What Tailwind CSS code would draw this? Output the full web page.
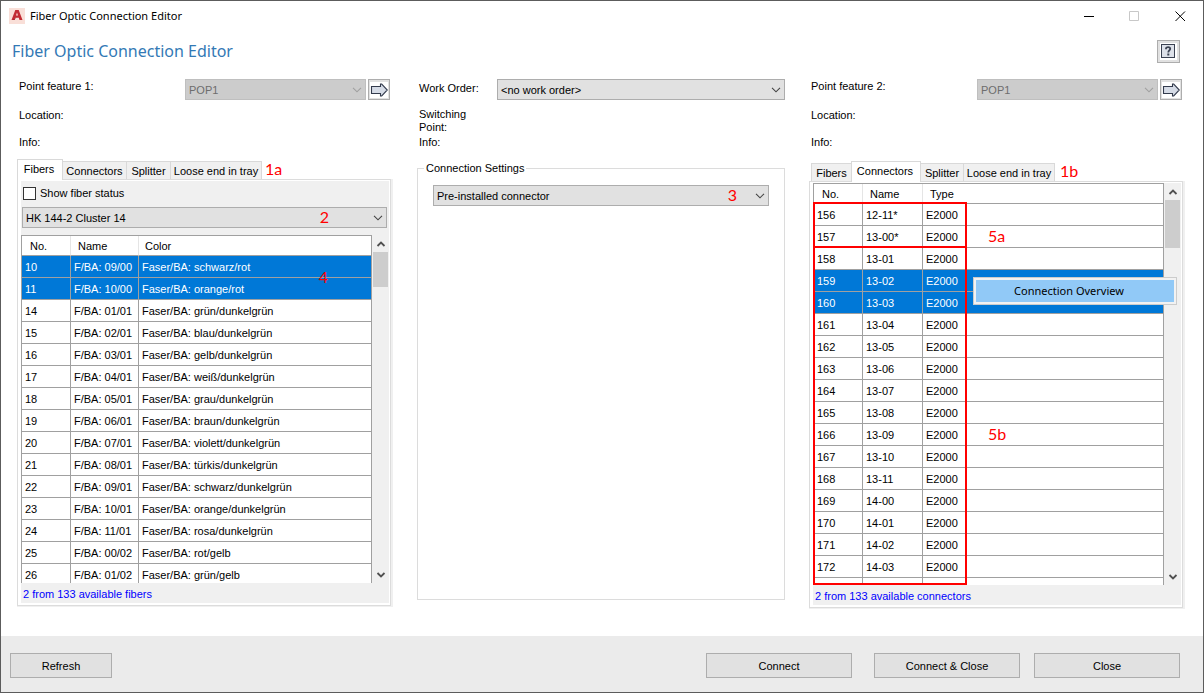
<!DOCTYPE html>
<html lang="en">
<head>
  <meta charset="UTF-8" />
  <meta name="viewport" content="width=device-width, initial-scale=1.0"/>
  <title>Fiber Optic Connection Editor</title>
  <script src="https://cdn.jsdelivr.net/npm/@tailwindcss/browser@4"></script>
</head>
<body class="flex h-screen flex-col overflow-hidden border border-[#5c5c5c] bg-white font-['Liberation_Sans',Arial,sans-serif] text-[11px] leading-[14px] text-black">

  <!-- Icons -->
  <svg class="hidden">
    <symbol id="chevron" viewBox="0 0 10 6"><path d="M1 .8l4 4 4-4" fill="none" stroke="currentColor" stroke-width="1.1"/></symbol>
    <symbol id="scrollUp" viewBox="0 0 10 6"><path d="M1.500 5l3.500-3.500L8.500 5" fill="none" stroke="currentColor" stroke-width="1.800"/></symbol>
    <symbol id="scrollDown" viewBox="0 0 10 6"><path d="M1.500 1L5 4.500 8.500 1" fill="none" stroke="currentColor" stroke-width="1.800"/></symbol>
    <symbol id="arrow" viewBox="0 0 18 16">
      <rect width="18" height="16" fill="#fff"/>
      <path d="M1.500 4.500h9V2h1.200l5.600 6-5.600 6h-1.200v-2.500h-9z" fill="#d5dbe6" stroke="#333b4d" stroke-width="1.100"/>
    </symbol>
  </svg>

  <!-- Title bar -->
  <header class="flex h-[30px] shrink-0 items-center pl-2">
    <svg class="size-4" viewBox="0 0 16 16">
      <rect width="16" height="16" fill="#f9dfd8"/>
      <path d="M2.500 12L6.300 2h3.400l3.800 10h-3l-.7-2.300H6.300L5.500 12zM7 7.500h2L8 4.600z" fill="#c22b33"/>
      <path d="M4 12l3.500-2.300H6.300L5.500 12z" fill="#7d1720"/>
    </svg>
    <span class="ml-[5px] grow font-['Noto_Sans',sans-serif] text-[11px]">Fiber Optic Connection Editor</span>
    <button aria-label="Minimize" class="flex h-full w-[46px] items-center justify-center"><svg class="size-[11px]" viewBox="0 0 11 11"><path d="M1 5.500h10" stroke="#000"/></svg></button>
    <button aria-label="Maximize" class="flex h-full w-[46px] items-center justify-center"><svg class="size-[11px]" viewBox="0 0 11 11"><path d="M.5.5h9v9h-9z" fill="none" stroke="#c8c8c8"/></svg></button>
    <button aria-label="Close window" class="flex h-full w-[46px] items-center justify-center"><svg class="size-[11px]" viewBox="0 0 11 11"><path d="M.5.5l9.500 9.500M10 .5L.5 10" stroke="#000"/></svg></button>
  </header>

  <div class="flex h-12 shrink-0 items-start justify-between pr-[23px] pl-[11px]">
    <h1 class="pt-2 font-['Noto_Sans',sans-serif] text-[16px] leading-6 text-[#3379b5]">Fiber Optic Connection Editor</h1>
    <button aria-label="Help" class="mt-[9px] flex size-[23px] items-center justify-center border border-[#adadad] bg-[#e1e1e1]">
      <svg class="size-[17px]" viewBox="0 0 17 17">
        <rect width="17" height="17" fill="#fff"/>
        <rect x="1.500" y="1.500" width="13" height="13" fill="#dde1e9" stroke="#3b4252"/>
        <path d="M6 6.200V5.500C6 3.600 10.200 3.600 10.200 5.700 10.200 7.400 8.300 7.500 8.300 9.500" fill="none" stroke="#3b4252" stroke-width="1.800"/>
        <rect x="7.300" y="10.500" width="2" height="2" fill="#3b4252"/>
      </svg>
    </button>
  </div>

  <main class="grid min-h-0 grow grid-cols-[376fr_368fr_376fr] gap-6 pr-[18px] pl-4">

    <!-- Point feature 1 -->
    <section class="flex min-h-0 min-w-0 flex-col">
      <div class="flex items-start pr-[3px] pl-[2px]">
        <label for="point1" class="w-[166px] shrink-0">Point feature 1:</label>
        <div class="relative grow text-[#6d6d6d]">
          <select id="point1" disabled class="block h-[21px] w-full appearance-none border border-[#bfbfbf] bg-[#cccccc] px-[3px] opacity-100"><option>POP1</option></select>
          <svg class="pointer-events-none absolute top-2 right-1 h-[6px] w-[10px] text-[#a0a0a0]"><use href="#chevron"/></svg>
        </div>
        <button aria-label="Select point feature 1" class="ml-[2px] flex h-[21px] w-[22px] items-center justify-center border border-[#adadad] bg-[#e1e1e1]"><svg class="h-4 w-[18px]"><use href="#arrow"/></svg></button>
      </div>
      <p class="mt-2 pl-[2px]">Location:</p>
      <p class="mt-[13px] pl-[2px]">Info:</p>

      <div class="mt-[10px] flex items-end">
        <button class="z-10 -mb-px h-[21px] w-[46px] border border-b-0 border-[#d9d9d9] bg-white pr-[2px] pb-[2px]">Fibers</button>
        <button class="-ml-px h-[18px] w-[65px] border border-b-0 border-[#d9d9d9] bg-[#f0f0f0]">Connectors</button>
        <button class="-ml-px h-[18px] w-[45px] border border-b-0 border-[#d9d9d9] bg-[#f0f0f0]">Splitter</button>
        <button class="-ml-px h-[18px] w-[92px] border border-b-0 border-[#d9d9d9] bg-[#f0f0f0]">Loose end in tray</button>
        <span class="ml-[3px] pb-px font-[Lato,sans-serif] text-[16px] leading-[18px] text-[#f00]">1a</span>
      </div>
      <div class="mb-[29px] flex min-h-0 grow flex-col border-r-2 border-b border-[#f0f0f0]">
        <div class="flex min-h-0 grow flex-col border border-[#dcdcdc] px-[3px] pt-px pr-px pb-[2px]">
          <div class="flex min-h-0 grow flex-col bg-[#f0f0f0] pr-px">
            <label class="mb-[2px] flex h-6 shrink-0 items-center pl-[2px]"><input type="checkbox" class="mr-1 size-[13px] appearance-none border border-[#333] bg-white"/>Show fiber status</label>
            <div class="relative mr-px ml-px shrink-0">
              <select aria-label="Cable" class="block h-[21px] w-full appearance-none border border-[#adadad] bg-[#e1e1e1] px-[3px]"><option>HK 144-2 Cluster 14</option></select>
              <span class="absolute top-0 right-[58px] font-[Lato,sans-serif] text-[16px] leading-5 text-[#f00]">2</span>
              <svg class="pointer-events-none absolute top-2 right-1 h-[6px] w-[10px] text-[#444]"><use href="#chevron"/></svg>
            </div>
            <div class="relative mt-[7px] flex min-h-0 grow">
              <div class="min-w-0 grow overflow-hidden border-t border-l border-[#a0a0a0] bg-white">
                <table class="w-full table-fixed border-separate border-spacing-0">
                  <thead><tr class="h-5 text-left">
                    <th class="w-[49px] border-r border-b border-r-[#e5e5e5] border-b-[#a0a0a0] p-0 pl-2 font-normal">No.</th>
                    <th class="w-[68px] border-r border-b border-r-[#e5e5e5] border-b-[#a0a0a0] p-0 pl-[7px] font-normal">Name</th>
                    <th class="border-r border-b border-[#a0a0a0] p-0 pl-[6px] font-normal">Color</th>
                  </tr></thead>
                  <tbody id="fibers"></tbody>
                </table>
              </div>
              <div class="ml-px flex w-[15px] shrink-0 flex-col items-center justify-between">
                <svg class="mt-[6px] h-[6px] w-[10px] shrink-0 text-[#505050]"><use href="#scrollUp"/></svg>
                <div class="mt-[5px] h-[35px] w-[15px] shrink-0 bg-[#cdcdcd]"></div>
                <svg class="mt-auto mb-[5px] h-[6px] w-[10px] shrink-0 text-[#505050]"><use href="#scrollDown"/></svg>
              </div>
              <span class="absolute top-8 right-[60px] font-[Lato,sans-serif] text-[16px] leading-5 text-[#f00]">4</span>
            </div>
            <p class="h-5 shrink-0 pt-1 pl-[2px] text-[#00f]">2 from 133 available fibers</p>
          </div>
        </div>
      </div>
    </section>

    <!-- Work order -->
    <section class="flex min-h-0 min-w-0 flex-col">
      <div class="flex items-start">
        <label for="order" class="w-20 shrink-0 pt-[2px] pl-[2px]">Work Order:</label>
        <div class="relative grow">
          <select id="order" class="block h-[21px] w-full appearance-none border border-[#adadad] bg-[#e1e1e1] px-[3px]"><option>&lt;no work order&gt;</option></select>
          <svg class="pointer-events-none absolute top-2 right-1 h-[6px] w-[10px] text-[#444]"><use href="#chevron"/></svg>
        </div>
      </div>
      <p class="mt-2 pl-[2px] leading-[13px]">Switching<br/>Point:</p>
      <p class="mt-px pl-[2px]">Info:</p>
      <fieldset class="mt-3 mb-9 min-w-0 grow border border-[#dcdcdc] px-[15px]">
        <legend class="-ml-[9px] px-[2px]">Connection Settings</legend>
        <div class="relative mt-[10px]">
          <select aria-label="Connection type" class="block h-[21px] w-full appearance-none border border-[#adadad] bg-[#e1e1e1] px-[3px]"><option>Pre-installed connector</option></select>
          <span class="absolute top-0 right-8 font-[Lato,sans-serif] text-[16px] leading-5 text-[#f00]">3</span>
          <svg class="pointer-events-none absolute top-2 right-1 h-[6px] w-[10px] text-[#444]"><use href="#chevron"/></svg>
        </div>
      </fieldset>
    </section>

    <!-- Point feature 2 -->
    <section class="flex min-h-0 min-w-0 flex-col">
      <div class="flex items-start pr-[3px] pl-[2px]">
        <label for="point2" class="w-[166px] shrink-0">Point feature 2:</label>
        <div class="relative grow text-[#6d6d6d]">
          <select id="point2" disabled class="block h-[21px] w-full appearance-none border border-[#bfbfbf] bg-[#cccccc] px-[3px] opacity-100"><option>POP1</option></select>
          <svg class="pointer-events-none absolute top-2 right-1 h-[6px] w-[10px] text-[#a0a0a0]"><use href="#chevron"/></svg>
        </div>
        <button aria-label="Select point feature 2" class="ml-[2px] flex h-[21px] w-[22px] items-center justify-center border border-[#adadad] bg-[#e1e1e1]"><svg class="h-4 w-[18px]"><use href="#arrow"/></svg></button>
      </div>
      <p class="mt-2 pl-[2px]">Location:</p>
      <p class="mt-[13px] pl-[2px]">Info:</p>

      <div class="mt-3 flex items-end pl-[2px]">
        <button class="h-[18px] w-[41px] border border-b-0 border-[#d9d9d9] bg-[#f0f0f0]">Fibers</button>
        <button class="z-10 -mb-px -ml-px h-[21px] w-[70px] border border-b-0 border-[#d9d9d9] bg-white pr-[2px] pb-[2px]">Connectors</button>
        <button class="-ml-px h-[18px] w-[44px] border border-b-0 border-[#d9d9d9] bg-[#f0f0f0]">Splitter</button>
        <button class="-ml-px h-[18px] w-[92px] border border-b-0 border-[#d9d9d9] bg-[#f0f0f0]">Loose end in tray</button>
        <span class="ml-[5px] pb-px font-[Lato,sans-serif] text-[16px] leading-[18px] text-[#f00]">1b</span>
      </div>
      <div class="mb-[27px] flex min-h-0 grow flex-col border-r-2 border-b border-[#f0f0f0]">
        <div class="flex min-h-0 grow flex-col border border-[#dcdcdc] px-[3px] pt-px pr-px pb-[2px]">
          <div class="flex min-h-0 grow flex-col bg-[#f0f0f0] pr-px">
            <div class="relative flex min-h-0 grow">
              <div class="min-w-0 grow overflow-hidden border-t border-l border-[#a0a0a0] bg-white">
                <table class="w-full table-fixed border-separate border-spacing-0">
                  <thead><tr class="h-5 text-left">
                    <th class="w-[49px] border-r border-b border-r-[#e5e5e5] border-b-[#a0a0a0] p-0 pl-2 font-normal">No.</th>
                    <th class="w-[60px] border-r border-b border-r-[#e5e5e5] border-b-[#a0a0a0] p-0 pl-[7px] font-normal">Name</th>
                    <th class="w-[44px] border-b border-[#a0a0a0] p-0 pl-[7px] font-normal">Type</th>
                    <th class="border-r border-b border-[#a0a0a0] p-0"></th>
                  </tr></thead>
                  <tbody id="connectors"></tbody>
                </table>
              </div>
              <div class="ml-px flex w-[15px] shrink-0 flex-col items-center justify-between">
                <svg class="mt-[6px] h-[6px] w-[10px] shrink-0 text-[#505050]"><use href="#scrollUp"/></svg>
                <div class="mt-[5px] h-[48px] w-[15px] shrink-0 bg-[#cdcdcd]"></div>
                <svg class="mt-auto mb-[5px] h-[6px] w-[10px] shrink-0 text-[#505050]"><use href="#scrollDown"/></svg>
              </div>

              <!-- Marked cells -->
              <div class="pointer-events-none absolute top-[19px] bottom-0 left-0 w-[154px] border-2 border-[#f00]">
                <div class="h-11 border-b-2 border-[#f00]"></div>
              </div>
              <span class="absolute top-[43px] left-[175px] font-[Lato,sans-serif] text-[16px] leading-5 text-[#f00]">5a</span>
              <span class="absolute top-[241px] left-[175px] font-[Lato,sans-serif] text-[16px] leading-5 text-[#f00]">5b</span>

              <!-- Context menu -->
              <div class="absolute top-[94px] left-40 w-[204px] border border-[#ccc] bg-[#f2f2f2] p-[2px]">
                <button class="block h-[22px] w-full bg-[#91c9f7] pr-5 text-center font-['Noto_Sans',sans-serif] text-[11px]"><span class="pl-2">Connection Overview</span></button>
              </div>
            </div>
            <p class="h-5 shrink-0 pt-1 pl-[2px] text-[#00f]">2 from 133 available connectors</p>
          </div>
        </div>
      </div>
    </section>
  </main>

  <!-- Buttons -->
  <footer class="flex h-14 shrink-0 items-start bg-[#ebebeb] pt-[17px] pr-[23px] pl-[9px]">
    <button class="h-[25px] w-[102px] border border-[#adadad] bg-[#e1e1e1]">Refresh</button>
    <button class="ml-auto h-[25px] w-[146px] border border-[#adadad] bg-[#e1e1e1]">Connect</button>
    <button class="ml-[22px] h-[25px] w-[146px] border border-[#adadad] bg-[#e1e1e1]">Connect &amp; Close</button>
    <button class="ml-[14px] h-[25px] w-[146px] border border-[#adadad] bg-[#e1e1e1]">Close</button>
  </footer>

  <script>
    const fibers = [
      ['10', '09/00', 'schwarz/rot'],
      ['11', '10/00', 'orange/rot'],
      ['14', '01/01', 'grün/dunkelgrün'],
      ['15', '02/01', 'blau/dunkelgrün'],
      ['16', '03/01', 'gelb/dunkelgrün'],
      ['17', '04/01', 'weiß/dunkelgrün'],
      ['18', '05/01', 'grau/dunkelgrün'],
      ['19', '06/01', 'braun/dunkelgrün'],
      ['20', '07/01', 'violett/dunkelgrün'],
      ['21', '08/01', 'türkis/dunkelgrün'],
      ['22', '09/01', 'schwarz/dunkelgrün'],
      ['23', '10/01', 'orange/dunkelgrün'],
      ['24', '11/01', 'rosa/dunkelgrün'],
      ['25', '00/02', 'rot/gelb'],
      ['26', '01/02', 'grün/gelb']
    ].map(([no, name, color]) => [no, 'F/BA: ' + name, 'Faser/BA: ' + color]);

    const names = ['12-11*', '13-00*', '13-01', '13-02', '13-03', '13-04', '13-05', '13-06', '13-07',
      '13-08', '13-09', '13-10', '13-11', '14-00', '14-01', '14-02', '14-03'];
    const connectors = names.map((name, i) => [156 + i, name, 'E2000', '']);
    connectors.push(['', '', '', '']);

    function fillTable(id, rows, selected) {
      document.getElementById(id).innerHTML = rows.map((row) => {
        const color = selected.includes(String(row[0])) ? 'bg-[#0078d7] text-white' : 'bg-white';
        const cells = row.map((text) => `<td class="overflow-hidden border-r border-b border-[#a0a0a0] p-0 pl-[3px] whitespace-nowrap">${text}</td>`);
        return `<tr class="h-[22px] ${color}">${cells.join('')}</tr>`;
      }).join('');
    }

    fillTable('fibers', fibers, ['10', '11']);
    fillTable('connectors', connectors, ['159', '160']);
  </script>
</body>
</html>
